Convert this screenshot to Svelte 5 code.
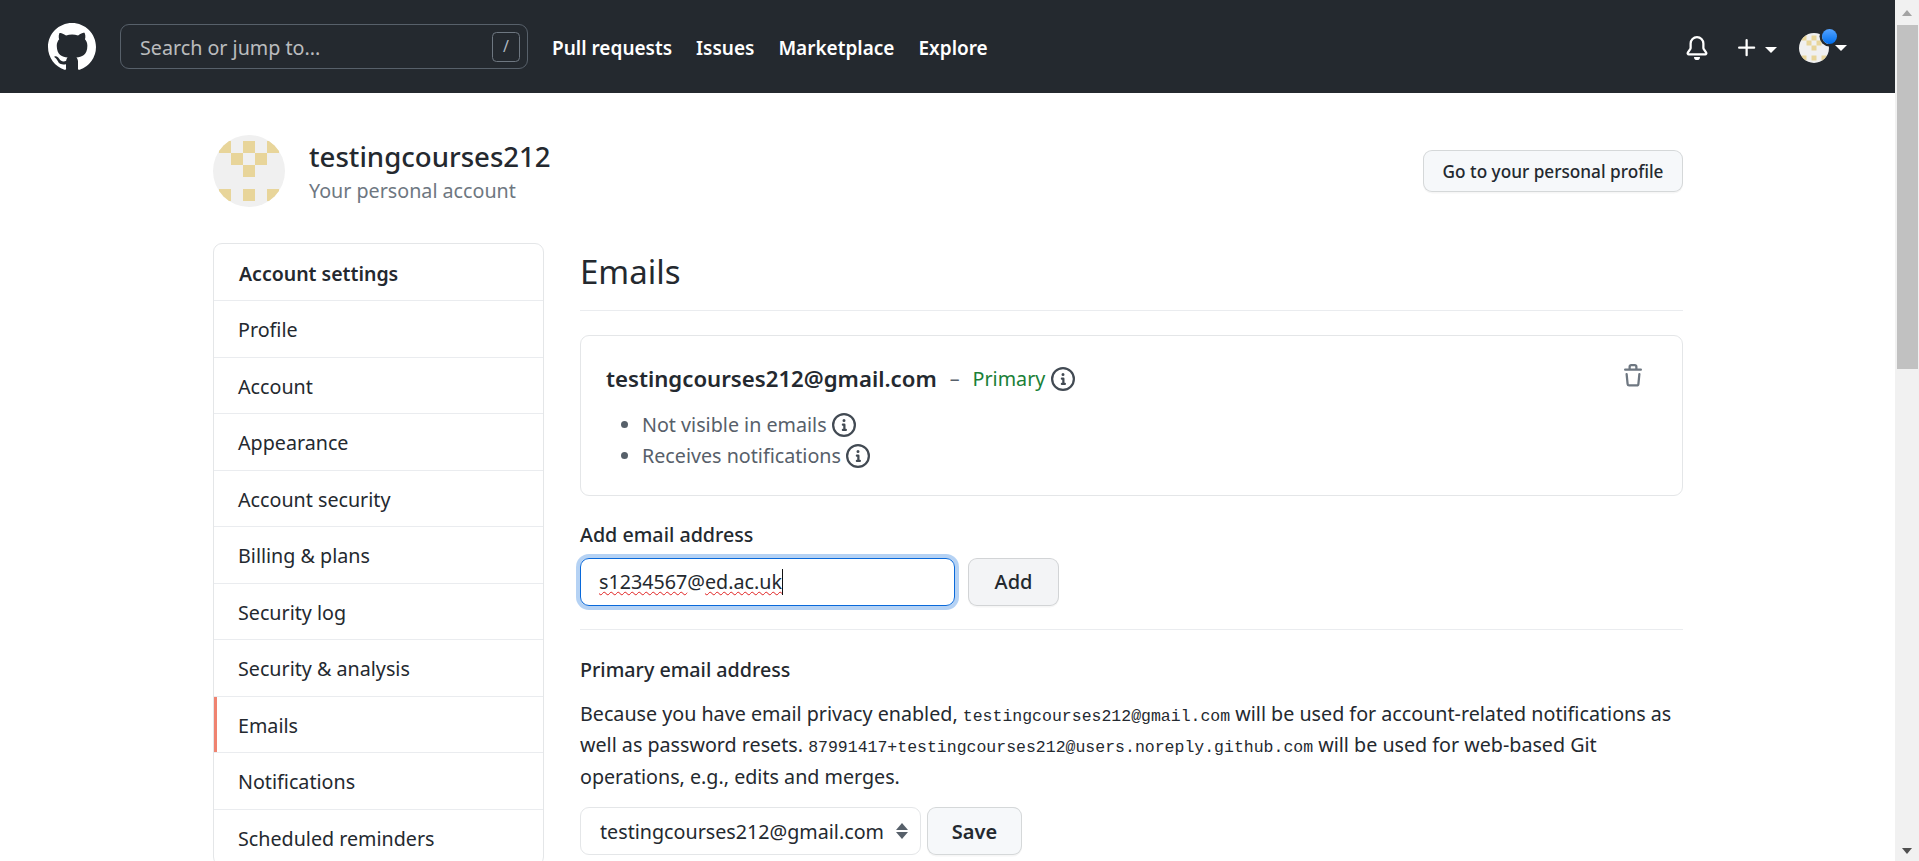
<script>
  const menu = ['Profile', 'Account', 'Appearance', 'Account security', 'Billing & plans', 'Security log', 'Security & analysis', 'Emails', 'Notifications', 'Scheduled reminders'];
  const cells = [[0,0],[2,0],[4,0],[1,1],[3,1],[2,2],[0,4],[2,4],[4,4]];
</script>

{#snippet info()}
  <svg class="info" viewBox="0 0 16 16" width="24" height="24"><path fill-rule="evenodd" d="M8 1.5a6.5 6.5 0 100 13 6.5 6.5 0 000-13zM0 8a8 8 0 1116 0A8 8 0 010 8zm6.5-.25A.75.75 0 017.25 7h1a.75.75 0 01.75.75v2.75h.25a.75.75 0 010 1.5h-2a.75.75 0 010-1.5h.25v-2h-.25a.75.75 0 01-.75-.75zM8 6a1 1 0 100-2 1 1 0 000 2z"/></svg>
{/snippet}

{#snippet identicon(size)}
  <svg class="identicon" viewBox="0 0 72 72" width={size} height={size}>
    <rect width="72" height="72" fill="#f0f0f0"/>
    {#each cells as [c, r]}
      <rect x={6 + c * 12} y={6 + r * 12} width="12" height="12" fill="#e8d59a"/>
    {/each}
  </svg>
{/snippet}

<div class="window">
  <div class="page">
    <header class="topbar">
      <svg class="logo" viewBox="0 0 16 16" width="48" height="48" fill="#fff"><path fill-rule="evenodd" d="M8 0C3.58 0 0 3.58 0 8c0 3.54 2.29 6.53 5.47 7.59.4.07.55-.17.55-.38 0-.19-.01-.82-.01-1.49-2.01.37-2.53-.49-2.69-.94-.09-.23-.48-.94-.82-1.13-.28-.15-.68-.52-.01-.53.63-.01 1.08.58 1.23.82.72 1.21 1.87.87 2.33.66.07-.52.28-.87.51-1.07-1.78-.2-3.64-.89-3.64-3.95 0-.87.31-1.59.82-2.15-.08-.2-.36-1.02.08-2.12 0 0 .67-.21 2.2.82.64-.18 1.32-.27 2-.27.68 0 1.36.09 2 .27 1.53-1.04 2.2-.82 2.2-.82.44 1.1.16 1.92.08 2.12.51.56.82 1.27.82 2.15 0 3.07-1.87 3.75-3.65 3.95.29.25.54.73.54 1.48 0 1.07-.01 1.93-.01 2.2 0 .21.15.46.55.38A8.013 8.013 0 0016 8c0-4.42-3.58-8-8-8z"/></svg>
      <div class="search">
        <span>Search or jump to...</span>
        <kbd>/</kbd>
      </div>
      <nav class="nav">
        <a>Pull requests</a>
        <a>Issues</a>
        <a>Marketplace</a>
        <a>Explore</a>
      </nav>
      <div class="actions">
        <svg viewBox="0 0 16 16" width="24" height="24" fill="#fff"><path d="M8 16a2 2 0 001.985-1.75c.017-.137-.097-.25-.235-.25h-3.5c-.138 0-.252.113-.235.25A2 2 0 008 16z"/><path fill-rule="evenodd" d="M8 1.5A3.5 3.5 0 004.5 5v2.947c0 .346-.102.683-.294.97l-1.703 2.556a.018.018 0 00-.003.01l.001.006c0 .002.002.004.004.006a.017.017 0 00.006.004l.007.001h10.964l.007-.001a.016.016 0 00.006-.004.016.016 0 00.004-.006l.001-.007a.017.017 0 00-.003-.01l-1.703-2.554a1.75 1.75 0 01-.294-.97V5A3.5 3.5 0 008 1.5zM3 5a5 5 0 0110 0v2.947c0 .05.015.098.042.139l1.703 2.555A1.518 1.518 0 0113.482 13H2.518a1.518 1.518 0 01-1.263-2.36l1.703-2.554A.25.25 0 003 7.947V5z"/></svg>
        <div class="plus">
          <svg viewBox="0 0 16 16" width="24" height="24" fill="#fff"><path fill-rule="evenodd" d="M7.75 2a.75.75 0 01.75.75V7h4.25a.75.75 0 110 1.5H8.5v4.25a.75.75 0 11-1.5 0V8.5H2.75a.75.75 0 010-1.5H7V2.75A.75.75 0 017.75 2z"/></svg>
          <i class="caret"></i>
        </div>
        <div class="me">
          <div class="me-avatar">{@render identicon(30)}</div>
          <span class="dot"></span>
          <i class="caret"></i>
        </div>
      </div>
    </header>

    <div class="container">
      <div class="account">
        <div class="avatar">{@render identicon(72)}</div>
        <div class="who">
          <div class="name">testingcourses212</div>
          <div class="kind">Your personal account</div>
        </div>
        <button class="btn small">Go to your personal profile</button>
      </div>

      <div class="columns">
        <aside class="menu">
          <h3>Account settings</h3>
          {#each menu as item}
            <a class:selected={item === 'Emails'}>{item}</a>
          {/each}
        </aside>

        <main class="content">
          <h2 class="subhead">Emails</h2>

          <div class="email-box">
            <div class="email-line">
              <strong>testingcourses212@gmail.com</strong>
              <span class="dash">–</span>
              <span class="primary">Primary</span>
              {@render info()}
              <svg class="trash" viewBox="0 0 16 16" width="24" height="24" fill="#6e7781"><path fill-rule="evenodd" d="M6.5 1.75a.25.25 0 01.25-.25h2.5a.25.25 0 01.25.25V3h-3V1.75zm4.5 0V3h2.25a.75.75 0 010 1.5H2.75a.75.75 0 010-1.5H5V1.75C5 .784 5.784 0 6.75 0h2.5C10.216 0 11 .784 11 1.75zM4.496 6.675a.75.75 0 10-1.492.15l.66 6.6A1.75 1.75 0 005.405 15h5.19c.9 0 1.652-.681 1.741-1.576l.66-6.6a.75.75 0 00-1.492-.149l-.66 6.6a.25.25 0 01-.249.225h-5.19a.25.25 0 01-.249-.225l-.66-6.6z"/></svg>
            </div>
            <ul>
              <li>Not visible in emails {@render info()}</li>
              <li>Receives notifications {@render info()}</li>
            </ul>
          </div>

          <div class="add-form">
            <label for="add-email">Add email address</label>
            <div class="row">
              <div class="input" id="add-email">
                <span class="typo">s1234567</span>@<span class="typo">ed.ac.uk</span><i class="text-caret"></i>
              </div>
              <button class="btn large add">Add</button>
            </div>
          </div>

          <hr />

          <div class="primary-form">
            <div class="label">Primary email address</div>
            <p>Because you have email privacy enabled, <code>testingcourses212@gmail.com</code> will be used for account-related notifications as<br />well as password resets. <code>87991417+testingcourses212@users.noreply.github.com</code> will be used for web-based Git<br />operations, e.g., edits and merges.</p>
            <div class="row tight">
              <div class="select">
                <span>testingcourses212@gmail.com</span>
                <svg viewBox="0 0 12 16" width="12" height="16"><path d="M6 0l6 7H0z" fill="#57606a"/><path d="M6 16L0 9h12z" fill="#57606a"/></svg>
              </div>
              <button class="btn large save">Save</button>
            </div>
          </div>
        </main>
      </div>
    </div>
  </div>

  <div class="scrollbar">
    <span class="arrow up"></span>
    <div class="track"><div class="thumb"></div></div>
    <span class="arrow down"></span>
  </div>
</div>

<style>
  :global(body) {
    margin: 0;
    background: #fff;
    overflow: hidden;
  }

  .window {
    display: flex;
    height: 861px;
    overflow: hidden;
    font-family: "Noto Sans", sans-serif;
    font-size: 19.7px;
    color: #24292f;
  }

  .page {
    flex: 1;
    min-width: 0;
    overflow: hidden;
  }

  .topbar {
    display: flex;
    align-items: center;
    height: 93px;
    padding: 0 48px;
    background: #24292f;
    box-sizing: border-box;
  }

  .logo {
    flex: none;
    margin-right: 24px;
  }

  .search {
    display: flex;
    align-items: center;
    justify-content: space-between;
    width: 408px;
    height: 45px;
    padding: 0 7px 0 19px;
    box-sizing: border-box;
    border: 1.5px solid #57606a;
    border-radius: 9px;
    color: rgba(255, 255, 255, 0.7);
  }

  .search span {
    padding-top: 2px;
  }

  kbd {
    width: 28px;
    height: 30px;
    border: 1.5px solid #6e7781;
    border-radius: 4.5px;
    box-sizing: border-box;
    font: 16px/27px "Noto Sans", sans-serif;
    text-align: center;
    color: #afb8c1;
  }

  .nav {
    display: flex;
    gap: 24px;
    margin-left: 24px;
    font-size: 19px;
    font-weight: 600;
    color: #fff;
    padding-top: 2px;
  }

  .actions {
    display: flex;
    align-items: center;
    margin-left: auto;
    padding-top: 3px;
  }

  .plus {
    display: flex;
    align-items: center;
    margin-left: 26px;
  }

  .caret {
    display: inline-block;
    border-style: solid;
    border-width: 6px 6px 0;
    border-color: #fff transparent transparent;
    margin-left: 6px;
  }

  .plus .caret {
    margin-top: 4px;
  }

  .me {
    position: relative;
    display: flex;
    align-items: center;
    margin-left: 22px;
  }

  .me-avatar {
    display: flex;
    width: 30px;
    height: 30px;
    border-radius: 50%;
    overflow: hidden;
  }

  .dot {
    position: absolute;
    left: 22.5px;
    top: -4px;
    width: 15px;
    height: 15px;
    border-radius: 50%;
    background: linear-gradient(#54a3ff, #006eed);
    box-shadow: 0 0 0 2.5px #24292f;
  }

  .container {
    width: 1470px;
    margin: 0 auto;
    padding-left: 1px;
  }

  .account {
    display: flex;
    align-items: center;
    padding-top: 42px;
  }

  .avatar {
    display: flex;
    width: 72px;
    height: 72px;
    border-radius: 50%;
    overflow: hidden;
  }

  .who {
    flex: 1;
    margin-left: 24px;
    padding-top: 1px;
  }

  .name {
    font-size: 27.6px;
    line-height: 37px;
    font-weight: 500;
  }

  .kind {
    line-height: 31px;
    color: #6e7781;
  }

  .btn {
    font-family: inherit;
    color: #24292f;
    background: #f6f8fa;
    border: 1.5px solid rgba(27, 31, 36, 0.15);
    border-radius: 9px;
    box-shadow: 0 1.5px 0 rgba(27, 31, 36, 0.04);
    box-sizing: border-box;
  }

  .small {
    width: 260px;
    height: 42px;
    font-size: 17.2px;
    font-weight: 500;
    padding: 0;
  }

  .large {
    height: 48px;
    font-size: 20px;
    font-weight: 500;
    padding: 0;
  }

  .add {
    width: 91px;
    background: #f3f4f6;
  }

  .save {
    width: 95px;
    font-weight: 600;
  }

  .columns {
    display: flex;
    gap: 36px;
    align-items: flex-start;
    margin-top: 36px;
  }

  .menu {
    flex: none;
    width: 331px;
    box-sizing: border-box;
    border: 1.5px solid #e4e6e8;
    border-radius: 9px;
    overflow: hidden;
  }

  .menu h3 {
    margin: 0;
    padding: 14px 24px 10px 25px;
    font-size: 19.5px;
    line-height: 32px;
    font-weight: 600;
  }

  .menu a {
    display: block;
    position: relative;
    padding: 13px 24px 11px;
    line-height: 31.5px;
    border-top: 1.5px solid #eaecef;
  }

  .menu a.selected::before {
    content: "";
    position: absolute;
    left: 0;
    top: 0;
    bottom: 0;
    width: 3px;
    background: #ef8370;
  }

  .content {
    flex: 1;
    min-width: 0;
  }

  .subhead {
    margin: 0 0 24px;
    padding: 4px 0 12.5px;
    font-size: 33px;
    line-height: 50px;
    font-weight: 400;
    border-bottom: 1.5px solid #eaecef;
  }

  .email-box {
    height: 161px;
    box-sizing: border-box;
    padding: 25px 24px 0 25px;
    border: 1.5px solid #e4e6e8;
    border-radius: 9px;
  }

  .email-line {
    display: flex;
    align-items: center;
    height: 36px;
  }

  .email-line strong {
    font-size: 22.2px;
    font-weight: 600;
  }

  .dash {
    margin: 0 13px;
    color: #57606a;
  }

  .primary {
    color: #1a7f37;
    margin-right: 6px;
  }

  .info {
    fill: #424a53;
    vertical-align: -5px;
  }

  .trash {
    margin-left: auto;
    margin-right: 13px;
    margin-top: -6px;
  }

  .email-box ul {
    margin: 12px 0 0;
    padding: 0 0 0 36px;
    color: #57606a;
    line-height: 31.5px;
  }

  .email-box li {
    height: 31.5px;
  }

  .add-form {
    margin-top: 23px;
  }

  label,
  .label {
    display: block;
    font-weight: 500;
    line-height: 32px;
    margin-bottom: 7px;
  }

  .row {
    display: flex;
    gap: 13px;
  }

  .row.tight {
    gap: 6px;
  }

  .input {
    display: flex;
    align-items: center;
    width: 375px;
    height: 48px;
    padding: 0 18px;
    box-sizing: border-box;
    border: 1.5px solid #0969da;
    border-radius: 9px;
    box-shadow: 0 0 0 4px rgba(9, 105, 218, 0.3);
    white-space: pre;
  }

  .typo {
    text-decoration: underline wavy #e02020 1px;
    text-underline-offset: 2px;
  }

  .text-caret {
    width: 1px;
    height: 26px;
    background: #111;
  }

  hr {
    margin: 23px 0 0;
    border: 0;
    border-top: 1.5px solid #eaecef;
  }

  .primary-form {
    margin-top: 24px;
  }

  .primary-form .label {
    margin-bottom: 12px;
  }

  p {
    margin: 0 0 15px;
    line-height: 31.5px;
    color: #24292f;
  }

  code {
    font-family: "Liberation Mono", monospace;
    font-size: 16.5px;
    line-height: 1;
  }

  .select {
    display: flex;
    align-items: center;
    justify-content: space-between;
    width: 341px;
    height: 48px;
    padding: 0 12px 0 19px;
    box-sizing: border-box;
    border: 1.5px solid #e4e6e8;
    border-radius: 9px;
  }

  .scrollbar {
    flex: none;
    width: 24px;
    display: flex;
    flex-direction: column;
    background: #f1f1f1;
  }

  .track {
    flex: 1;
  }

  .thumb {
    width: 21px;
    height: 344px;
    margin-left: 2px;
    background: #c1c1c1;
  }

  .arrow {
    flex: none;
    height: 25px;
    position: relative;
  }

  .arrow::after {
    content: "";
    position: absolute;
    left: 7px;
    top: 10px;
    border-style: solid;
    border-width: 0 5.5px 6px;
    border-color: transparent transparent #a3a3a3;
  }

  .arrow.down::after {
    top: 12px;
    border-width: 6px 5.5px 0;
    border-color: #505050 transparent transparent;
  }
</style>
